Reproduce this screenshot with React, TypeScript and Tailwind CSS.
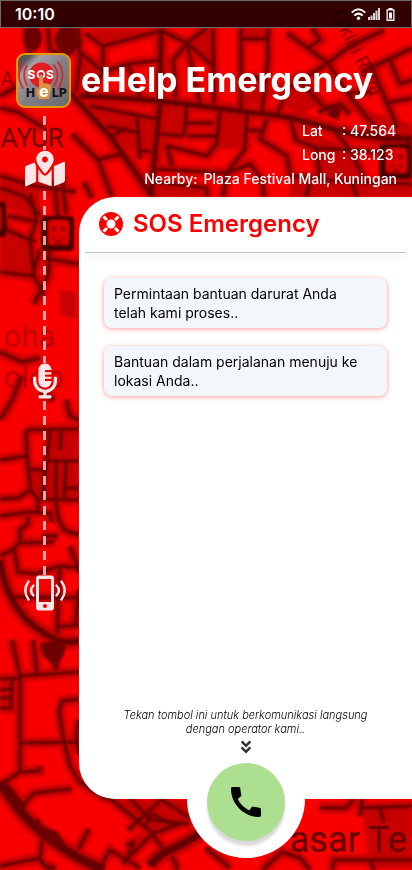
import { FaAngleDoubleDown, FaMapMarkedAlt, FaMicrophoneAlt } from "react-icons/fa";
import { MdCall } from "react-icons/md";

const streets = [
  // north west
  "M26 28 L30 60 L22 84 L0 96", "M48 28 L50 50 L66 56 L82 40", "M78 28 L80 60 L76 92", "M0 108 L18 112 L44 128",
  "M85 33 L103 46 L160 31", "M80 52 L103 72 L128 64 L160 60", "M103 46 L103 72 L84 98", "M128 64 L140 98",
  "M160 30 L187 43 L173 60 L176 98", "M187 43 L213 66", "M187 43 L207 28", "M187 43 L200 104",
  // north centre
  "M213 28 L214 104", "M241 28 L241 112", "M243 39 L268 39", "M268 28 L268 60 L262 112", "M243 78 L264 78",
  "M287 33 L328 63 L347 93 L377 129", "M328 63 L287 89 L277 116", "M312 28 L320 40 L308 48", "M300 81 L326 110",
  "M328 63 L350 46 L384 30", "M362 72 L412 48", "M370 63 L387 103 L412 98", "M390 60 L400 84 L412 80", "M387 103 L398 128",
  "M347 93 L372 92", "M318 112 L340 104 L350 114",
  // below the avenue
  "M90 106 L157 119", "M107 126 L140 133", "M137 116 L140 159", "M112 136 L126 128", "M138 150 L152 152",
  "M187 105 L184 136", "M187 123 L213 123", "M187 136 L216 136", "M160 134 L184 136", "M220 109 L217 143 L207 156 L167 146 L172 166",
  "M157 169 L227 173", "M154 182 L206 188 L208 197", "M247 113 L245 149 L227 173 L223 197", "M247 130 L262 131",
  "M267 119 L260 139 L287 156 L290 176", "M227 173 L250 164 L262 180 L264 197", "M290 176 L352 182 L412 184",
  "M290 118 L296 140 L316 148 L320 180", "M316 148 L350 150 L366 182", "M333 129 L350 150", "M352 182 L357 197",
  "M350 150 L378 152", "M310 182 L306 197", "M366 130 L390 142", "M395 134 L412 144",
  "M72 134 L98 160 L112 197", "M98 160 L112 156 L124 154",
  // west
  "M0 176 L34 186 L76 192", "M0 188 L24 196 L40 216", "M54 180 L58 218", "M62 176 L66 214", "M0 208 L6 230 L36 242",
  "M8 216 L38 222", "M30 194 L36 220 L30 240 L34 276 L44 296", "M0 272 L32 276 L40 250", "M44 258 L79 264",
  "M50 250 L48 276 L34 304", "M0 352 L22 362 L40 358", "M22 376 L12 400 L0 420", "M84 182 L92 198",
  "M66 400 L70 416 L79 420", "M40 392 L54 400", "M26 430 L79 429", "M26 430 L27 456 L0 460", "M27 456 L31 492",
  "M50 430 L47 460 L42 496", "M61 430 L60 450", "M46 461 L79 461", "M56 461 L56 498", "M66 461 L64 498", "M66 488 L79 488",
  "M28 469 L44 470 L44 498", "M0 499 L18 498 L30 490 L38 499 L79 500", "M56 500 L58 518 L64 530 L79 535",
  "M0 516 L28 512 L50 513 L52 522", "M28 516 L28 524 L20 530 L20 542 L14 549 L0 556", "M20 543 L54 542", "M38 500 L38 513",
  "M14 549 L18 572 L36 574 L60 566 L79 568", "M42 536 L58 536", "M70 546 L79 572",
  "M60 568 L58 600 L57 634", "M12 597 L79 598", "M58 627 L79 625", "M79 590 L75 624",
  // south west
  "M12 640 L20 676 L79 672", "M0 679 L20 678 L20 772 L0 785", "M33 640 L37 674", "M55 640 L56 670", "M12 680 L11 708 L0 708",
  "M0 690 L11 689", "M0 698 L11 698", "M22 743 L79 742", "M20 772 L39 771 L40 766", "M79 699 L62 701 L59 712 L64 742 L70 766 L80 782 L106 799",
  "M79 720 L76 736 L79 754", "M24 804 L34 793 L72 789", "M6 784 L26 808", "M42 840 L40 860 L50 870", "M0 866 L40 858",
  "M78 850 L89 829", "M44 866 L56 868", "M80 782 L112 800 L154 834", "M130 798 L150 820 L190 824",
  // south
  "M98 870 L110 850 L140 868", "M122 864 L152 834 L184 822", "M128 830 L162 799", "M158 797 L190 818", "M144 828 L152 814 L172 824",
  "M128 856 L134 842 L126 846", "M152 834 L164 850", "M172 856 L178 870",
  "M206 848 L230 868", "M262 870 L282 852 L300 858 L310 870", "M320 808 L346 808 L354 799",
  "M362 799 L360 816", "M362 808 L412 806", "M380 808 L384 822", "M332 870 L334 860 L412 860", "M370 860 L374 870",
];

const avenues = [
  { d: "M80 96 Q140 98 200 106 T273 115 T333 129 T412 138", w: 5 },
  { d: "M56 84 L70 93 L110 136 L150 193", w: 5 },
  { d: "M161 28 L160 103 L151 197", w: 5 },
  { d: "M0 560 Q6 604 34 626 T79 640", w: 6 },
  { d: "M0 782 Q18 814 46 836 T104 870", w: 9 },
  { d: "M150 866 Q156 856 170 850 T212 826", w: 8 },
];

const blocks = [
  "M162 104 L187 106 L184 134 L160 132 Z", "M112 136 L138 134 L140 158 Z", "M242 78 L262 78 L262 104 L242 104 Z",
  "M0 180 L40 190 L38 216 L0 206 Z", "M60 290 L76 292 L76 320 L60 314 Z", "M48 432 L78 432 L78 460 L48 460 Z",
  "M30 470 L78 464 L78 498 L34 496 Z", "M110 800 L186 800 L188 826 L152 832 Z", "M362 808 L412 806 L412 868 L370 868 Z",
  "M350 106 L380 140 L412 150 L412 124 Z", "M214 110 L246 114 L244 148 L216 150 Z",
  "M80 60 L104 76 L84 96 Z", "M90 28 L156 30 L104 46 Z", "M266 92 L300 70 L326 100 L300 116 Z",
  "M90 106 L156 118 L150 150 L112 130 Z", "M154 182 L206 188 L206 197 L152 197 Z", "M300 126 L350 150 L366 180 L320 180 Z",
  "M196 28 L212 28 L212 64 L190 44 Z", "M241 28 L268 28 L268 39 L243 39 Z", "M290 176 L412 184 L412 197 L290 197 Z",
  "M0 220 L30 240 L32 274 L0 270 Z",
];

function TransitStop({ x, y }: { x: number; y: number }) {
  return (
    <g transform={`translate(${x} ${y})`}>
      <rect width="33" height="35" rx="4" fill="#4a0000" />
      <path d="M7 8Q7 4 12 4H23Q28 4 28 8V25Q28 29 24 29H11Q7 29 7 25Z" fill="#dc0000" />
      <circle cx="13" cy="13" r="2" fill="#700000" />
      <circle cx="22" cy="13" r="2" fill="#700000" />
      <path d="M11 22H15M20 22H24M14 29L17 25L21 29" stroke="#700000" strokeWidth="1.5" fill="none" />
    </g>
  );
}

function StreetMap() {
  return (
    <svg
      aria-hidden="true"
      className="absolute inset-0 -z-10 h-full w-full"
      viewBox="0 0 412 870"
      preserveAspectRatio="xMidYMid slice"
      fontFamily="Roboto, sans-serif"
    >
      <defs>
        <filter id="soft" filterUnits="userSpaceOnUse" x="-10" y="-10" width="432" height="890">
          <feGaussianBlur stdDeviation="0.8" />
        </filter>
        <filter id="halo" filterUnits="userSpaceOnUse" x="-10" y="-10" width="432" height="890">
          <feGaussianBlur stdDeviation="1.8" />
        </filter>
      </defs>
      <rect width="412" height="870" fill="#f80000" />
      <g fill="#c80000" filter="url(#halo)">
        {blocks.map((d) => <path key={d} d={d} />)}
      </g>
      <g fill="none" stroke="#bd0000" strokeWidth="11" opacity="0.85" filter="url(#halo)">
        {streets.map((d) => <path key={d} d={d} />)}
        {avenues.map(({ d, w }) => <path key={d} d={d} strokeWidth={w + 9} />)}
      </g>
      <g fill="none" stroke="#660000" strokeWidth="3.2" strokeLinejoin="round" filter="url(#soft)">
        {streets.map((d) => <path key={d} d={d} />)}
        {avenues.map(({ d, w }) => <path key={d} d={d} strokeWidth={w} />)}
      </g>
      <g fill="#700000" filter="url(#soft)">
        <ellipse cx="33" cy="38" rx="9" ry="13" />
        <ellipse cx="67" cy="39" rx="12" ry="15" />
        <path d="M40 643L55 641L66 645L64 655L57 665L55 673L53 665L42 655Z" />
        <path d="M32 822L38 818L42 826L58 832L66 846L48 842Z" />
        <path d="M326 104L342 108L338 120L328 116Z" />
      </g>
      <g filter="url(#soft)">
        <TransitStop x={41} y={216} />
        <TransitStop x={379} y={144} />
        <TransitStop x={-27} y={202} />
      </g>
      <g fill="#7c0000" stroke="#7c0000" strokeWidth="0.5">
        <text x="1" y="147" fontSize="26">AYUR</text>
        <text x="290" y="852" fontSize="36" fill="#6a0000">asar Te</text>
        <text x="4" y="347" fontSize="31" opacity="0.4">oha</text>
        <text x="4" y="388" fontSize="31" opacity="0.4">olop</text>
        <text x="332" y="14" fontSize="19" opacity="0.7" transform="rotate(64 332 14)">Cikini Raya</text>
        <text x="1" y="86" fontSize="20" opacity="0.7">A</text>
      </g>
    </svg>
  );
}

function StatusBar() {
  return (
    <div className="flex h-7 items-center justify-between border border-[#6b6b6b] bg-black/80 pr-4 pl-3.5 text-white">
      <time className="text-base font-semibold">10:10</time>
      <div className="flex items-center gap-0.5">
        <svg width="15" height="12" viewBox="0 0 15 12" fill="none" stroke="currentColor" strokeWidth="2" aria-label="Wi-Fi">
          <path d="M0.7 4.6 Q7.5 -2 14.3 4.6" />
          <path d="M3.3 7.6 Q7.5 3.6 11.7 7.6" />
          <circle cx="7.5" cy="10.2" r="1.7" fill="currentColor" stroke="none" />
        </svg>
        <svg width="12" height="12" viewBox="0 0 12 12" fill="currentColor" aria-label="Signal">
          <path d="M0 9h2v3H0zM2.500 7.500h2V12h-2zM5 5h2v7H5zM7.500 2.500h2V12h-2zM10 0H12v12h-2z" opacity="0.85" />
        </svg>
        <svg className="ml-1" width="9" height="13" viewBox="0 0 9 13" fill="currentColor" aria-label="Battery">
          <path fillRule="evenodd" d="M2.5 0h4v1.2H8.5V13H.5V1.2h2zM1.8 2.6v9h5.4v-9z" />
          <path d="M3 4.5h3v6H3z" />
        </svg>
      </div>
    </div>
  );
}

function Logo() {
  return (
    <svg className="block h-[55px] w-[55px]" viewBox="0 0 55 55" role="img" aria-label="eHelp SOS" fontFamily="Inter, sans-serif">
      <defs>
        <linearGradient id="metal" x1="0" y1="0" x2="1" y2="1">
          <stop offset="0" stopColor="#504a50" />
          <stop offset="0.14" stopColor="#5c575d" />
          <stop offset="0.24" stopColor="#a6a0a5" />
          <stop offset="0.5" stopColor="#848087" />
          <stop offset="1" stopColor="#67666f" />
        </linearGradient>
      </defs>
      <rect x="1" y="1" width="53" height="53" rx="8" fill="url(#metal)" stroke="#e39a08" strokeWidth="2" />
      <circle cx="25.500" cy="22" r="12.500" fill="#e31b23" />
      <g fill="none" stroke="#d8252c" strokeWidth="1.700" strokeLinecap="round">
        <path d="M11 13 Q5 22 11 32" />
        <path d="M7 10 Q-1 22 7 35" />
        <path d="M38 12 Q45 22 38 33" />
        <path d="M42 9 Q51 22 42 36" />
      </g>
      <text x="11.500" y="26" fontSize="12" fontWeight="800" fill="#fff">S</text>
      <circle cx="25" cy="21.500" r="3.500" fill="none" stroke="#fff" strokeWidth="1.800" />
      <text x="30" y="26" fontSize="12" fontWeight="800" fill="#fff">S</text>
      <path d="M23 23 Q25 20 27 23 V30 L33 31 Q36 32 35 36 L33 46 H23 L20 39 L21 35 L23 36 Z" fill="#d99343" />
      <text x="10" y="44" fontSize="12" fontWeight="800" fill="#111">H</text>
      <text x="23" y="44" fontSize="16" fontWeight="800" fill="#fff">e</text>
      <text x="36" y="44" fontSize="12" fontWeight="800" fill="#111">L</text>
      <text x="43" y="44" fontSize="12" fontWeight="800" fill="#111">P</text>
    </svg>
  );
}

function RingingPhone() {
  return (
    <svg className="block h-9 w-[42px]" viewBox="0 0 42 36" fill="none" aria-hidden="true">
      <path fillRule="evenodd" fill="#fff" d="M15 0.500H27A3 3 0 0 1 30 3.500V32.500A3 3 0 0 1 27 35.500H15A3 3 0 0 1 12 32.500V3.500A3 3 0 0 1 15 0.500ZM15 4V27H27V4ZM21 29A2 2 0 1 0 21 33A2 2 0 1 0 21 29Z" />
      <g stroke="#fff" strokeWidth="2.400" strokeLinecap="round">
        <path d="M9.500 10.500Q4.500 15.500 9.500 20.500" />
        <path d="M4.500 6.500Q-2 15.500 4.500 24.500" />
        <path d="M32.500 10.500Q37.500 15.500 32.500 20.500" />
        <path d="M37.500 6.500Q44 15.500 37.500 24.500" />
      </g>
    </svg>
  );
}

function LifeRing() {
  return (
    <svg className="h-6 w-6" viewBox="0 0 24 24" aria-hidden="true">
      <circle cx="12" cy="12" r="12" fill="#fa0000" />
      <path d="M4.500 4.500L8 8M19.500 4.500L16 8M4.500 19.500L8 16M19.500 19.500L16 16" stroke="#fff" strokeWidth="3" />
      <circle cx="12" cy="12" r="4.500" fill="#fff" />
    </svg>
  );
}

const dashes = "w-[3px] bg-[repeating-linear-gradient(to_bottom,rgba(255,225,225,0.75)_0_9px,transparent_9px_15px)]";

function Rail() {
  return (
    <aside className="flex w-[79px] shrink-0 flex-col items-center pt-[25px] pl-2.5">
      <div className="-ml-0.5">
        <Logo />
      </div>
      <div className={`mt-2 h-[34px] ${dashes}`} />
      <FaMapMarkedAlt className="h-[37px] w-10 text-white/90" />
      <div className={`mt-1 h-[172px] ${dashes}`} />
      <FaMicrophoneAlt className="h-9 w-6 text-white/90" />
      <div className={`mt-0.5 h-[174px] ${dashes}`} />
      <div className="opacity-90">
        <RingingPhone />
      </div>
    </aside>
  );
}

const messages = [
  "Permintaan bantuan darurat Anda telah kami proses..",
  "Bantuan dalam perjalanan menuju ke lokasi Anda..",
];

export default function App() {
  return (
    <div className="relative isolate flex min-h-screen flex-col overflow-hidden font-['Inter','Liberation_Sans',sans-serif]">
      <StreetMap />
      <StatusBar />
      <div className="flex flex-1">
        <Rail />
        <div className="flex min-w-0 flex-1 flex-col">
          <header className="pt-7 pr-[15px] text-white">
            <h1 className="pl-0.5 text-[34px] leading-12 font-bold whitespace-nowrap">eHelp Emergency</h1>
            <dl className="mt-[15px] flex flex-col items-end text-sm leading-6 font-medium whitespace-nowrap">
              <div className="flex">
                <dt className="w-10">Lat</dt>
                <dd className="w-[55px]">: 47.564</dd>
              </div>
              <div className="flex">
                <dt className="w-10">Long</dt>
                <dd className="w-[55px]">: 38.123</dd>
              </div>
              <div className="flex gap-1.5">
                <dt>Nearby:</dt>
                <dd>Plaza Festival Mall, Kuningan</dd>
              </div>
            </dl>
          </header>
          <main className="mt-1.5 flex flex-1 flex-col rounded-l-[36px] bg-white">
            <h2 className="flex items-center gap-2.5 pt-[11px] pb-3 pl-5 text-2xl leading-8 font-semibold text-[#fa0000]">
              <LifeRing />
              SOS Emergency
            </h2>
            <hr className="mr-1.5 ml-1.5 border-[#c4c4c4] shadow-[0_4px_6px_rgba(0,0,0,0.2)]" />
            <ul className="mt-[25px] mr-[25px] ml-[25px] flex flex-col gap-[18px]">
              {messages.map((message) => (
                <li
                  key={message}
                  className="rounded-lg bg-[#f3f7fb] py-1.5 pr-5 pl-2.5 text-sm leading-[19px] text-black shadow-[0_1px_5px_rgba(250,0,0,0.4)]"
                >
                  {message}
                </li>
              ))}
            </ul>
            <div className="mt-auto flex flex-col items-center pb-11">
              <p className="max-w-[250px] text-center text-[11px] leading-[14px] font-light text-black italic">
                Tekan tombol ini untuk berkomunikasi langsung dengan operator kami..
              </p>
              <FaAngleDoubleDown className="mt-[3px] h-4 w-4 text-[#333]" />
            </div>
          </main>
          <div className="mb-3 h-[59px] w-[118px] self-center rounded-b-full bg-white">
            <button
              type="button"
              aria-label="Hubungi operator"
              className="mx-auto -mt-9 flex h-[78px] w-[78px] items-center justify-center rounded-full bg-[#ace090] text-black shadow-[0_5px_3px_rgba(0,0,0,0.15)]"
            >
              <MdCall className="h-10 w-10" />
            </button>
          </div>
        </div>
      </div>
    </div>
  );
}
